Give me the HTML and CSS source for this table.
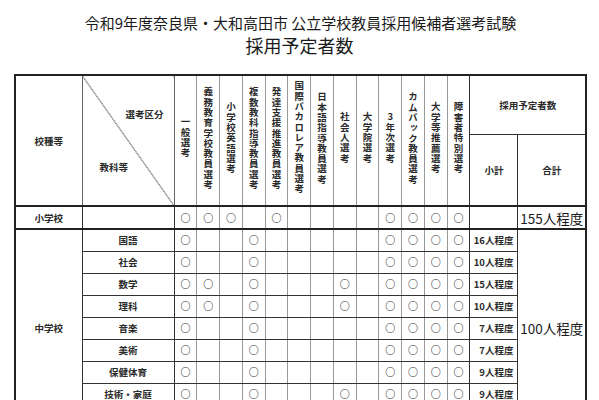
FILE: index.html
```html
<!DOCTYPE html>
<html lang="ja">
<head>
<meta charset="utf-8">
<title>採用予定者数</title>
<link rel="stylesheet" href="styles.css">
</head>
<body>
<div class="page">
  <div class="title1">令和9年度奈良県・大和高田市 公立学校教員採用候補者選考試験</div>
  <div class="title2">採用予定者数</div>
  <table class="plan">
    <colgroup>
      <col class="c-type">
      <col class="c-subj">
      <col class="c-x" span="13">
      <col class="c-sub">
      <col class="c-tot">
    </colgroup>
    <thead>
      <tr class="h1">
        <th rowspan="2" class="lab type-h">校種等</th>
        <th rowspan="2" class="lab diag"><div class="diag-in"><span class="d-top">選考区分</span><span class="d-bot">教科等</span></div></th>
        <th rowspan="2" class="v"><span class="vt">一般選考</span></th>
        <th rowspan="2" class="v"><span class="vt">義務教育学校教員選考</span></th>
        <th rowspan="2" class="v"><span class="vt">小学校英語選考</span></th>
        <th rowspan="2" class="v"><span class="vt">複数教科指導教員選考</span></th>
        <th rowspan="2" class="v"><span class="vt">発達支援推進教員選考</span></th>
        <th rowspan="2" class="v"><span class="vt">国際バカロレア教員選考</span></th>
        <th rowspan="2" class="v"><span class="vt">日本語指導教員選考</span></th>
        <th rowspan="2" class="v"><span class="vt">社会人選考</span></th>
        <th rowspan="2" class="v"><span class="vt">大学院選考</span></th>
        <th rowspan="2" class="v"><span class="vt">3年次選考</span></th>
        <th rowspan="2" class="v"><span class="vt">カムバック教員選考</span></th>
        <th rowspan="2" class="v"><span class="vt">大学等推薦選考</span></th>
        <th rowspan="2" class="v last"><span class="vt">障害者特別選考</span></th>
        <th colspan="2" class="lab plan-h">採用予定者数</th>
      </tr>
      <tr class="h2">
        <th class="lab">小計</th>
        <th class="lab">合計</th>
      </tr>
    </thead>
    <tbody>
      <tr class="elem">
        <td class="lab">小学校</td>
        <td></td>
        <td class="s">○</td><td class="s">○</td><td class="s">○</td><td class="s"></td><td class="s">○</td><td class="s"></td><td class="s"></td><td class="s"></td><td class="s"></td><td class="s">○</td><td class="s">○</td><td class="s">○</td><td class="s last">○</td>
        <td></td>
        <td class="total">155人程度</td>
      </tr>
      <tr>
        <td rowspan="9" class="lab">中学校</td>
        <td class="lab">国語</td>
        <td class="s">○</td><td class="s"></td><td class="s"></td><td class="s">○</td><td class="s"></td><td class="s"></td><td class="s"></td><td class="s"></td><td class="s"></td><td class="s">○</td><td class="s">○</td><td class="s">○</td><td class="s last">○</td>
        <td class="subt">16人程度</td>
        <td rowspan="9" class="total">100人程度</td>
      </tr>
      <tr>
        <td class="lab">社会</td>
        <td class="s">○</td><td class="s"></td><td class="s"></td><td class="s">○</td><td class="s"></td><td class="s"></td><td class="s"></td><td class="s"></td><td class="s"></td><td class="s">○</td><td class="s">○</td><td class="s">○</td><td class="s last">○</td>
        <td class="subt">10人程度</td>
      </tr>
      <tr>
        <td class="lab">数学</td>
        <td class="s">○</td><td class="s">○</td><td class="s"></td><td class="s">○</td><td class="s"></td><td class="s"></td><td class="s"></td><td class="s">○</td><td class="s"></td><td class="s">○</td><td class="s">○</td><td class="s">○</td><td class="s last">○</td>
        <td class="subt">15人程度</td>
      </tr>
      <tr>
        <td class="lab">理科</td>
        <td class="s">○</td><td class="s">○</td><td class="s"></td><td class="s">○</td><td class="s"></td><td class="s"></td><td class="s"></td><td class="s">○</td><td class="s"></td><td class="s">○</td><td class="s">○</td><td class="s">○</td><td class="s last">○</td>
        <td class="subt">10人程度</td>
      </tr>
      <tr>
        <td class="lab">音楽</td>
        <td class="s">○</td><td class="s"></td><td class="s"></td><td class="s">○</td><td class="s"></td><td class="s"></td><td class="s"></td><td class="s"></td><td class="s"></td><td class="s">○</td><td class="s">○</td><td class="s">○</td><td class="s last">○</td>
        <td class="subt">7人程度</td>
      </tr>
      <tr>
        <td class="lab">美術</td>
        <td class="s">○</td><td class="s"></td><td class="s"></td><td class="s">○</td><td class="s"></td><td class="s"></td><td class="s"></td><td class="s"></td><td class="s"></td><td class="s">○</td><td class="s">○</td><td class="s">○</td><td class="s last">○</td>
        <td class="subt">7人程度</td>
      </tr>
      <tr>
        <td class="lab">保健体育</td>
        <td class="s">○</td><td class="s"></td><td class="s"></td><td class="s">○</td><td class="s"></td><td class="s"></td><td class="s"></td><td class="s"></td><td class="s"></td><td class="s">○</td><td class="s">○</td><td class="s">○</td><td class="s last">○</td>
        <td class="subt">9人程度</td>
      </tr>
      <tr>
        <td class="lab">技術・家庭</td>
        <td class="s">○</td><td class="s"></td><td class="s"></td><td class="s">○</td><td class="s"></td><td class="s"></td><td class="s"></td><td class="s">○</td><td class="s"></td><td class="s">○</td><td class="s">○</td><td class="s">○</td><td class="s last">○</td>
        <td class="subt">9人程度</td>
      </tr>
      <tr>
        <td class="lab">英語</td>
        <td class="s">○</td><td class="s">○</td><td class="s"></td><td class="s">○</td><td class="s"></td><td class="s"></td><td class="s"></td><td class="s">○</td><td class="s"></td><td class="s">○</td><td class="s">○</td><td class="s">○</td><td class="s last">○</td>
        <td class="subt">15人程度</td>
      </tr>
    </tbody>
  </table>
</div>
</body>
</html>
```
FILE: styles.css
```css
html, body {
  margin: 0;
  padding: 0;
  background: #fff;
}
body {
  font-family: "Noto Sans CJK JP", "Noto Sans", sans-serif;
  color: #1a1a1a;
  width: 599px;
  height: 400px;
  overflow: hidden;
}
.page {
  padding-top: 15px;
}
.title1 {
  text-align: center;
  font-size: 15px;
  line-height: 16px;
  padding-left: 2px;
}
.title2 {
  text-align: center;
  font-size: 18px;
  line-height: 22px;
  margin-top: 3px;
}
.plan {
  margin-top: 18px;
  margin-left: 14px;
  border-collapse: collapse;
  table-layout: fixed;
  width: 571px;
  border: 2px solid #222;
}
.c-type { width: 67px; }
.c-subj { width: 92px; }
.c-x { width: 22.77px; }
.c-sub { width: 48px; }
.c-tot { width: 68px; }

.plan th, .plan td {
  border: 1px solid #333;
  padding: 0;
  text-align: center;
  vertical-align: middle;
  font-weight: 700;
}
.plan .lab {
  font-size: 9.5px;
  line-height: 12px;
  color: #2a2a2a;
}
.h1 { height: 59px; }
.h2 { height: 72px; }
.plan thead th {
  border-bottom: 2px solid #222;
}
.plan thead th.plan-h {
  border-bottom: 1px solid #333;
}
.plan th.type-h, .plan th.diag {
  border-right-color: #666;
}
.diag {
  background: linear-gradient(to top right, transparent calc(50% - 0.6px), #333 50%, transparent calc(50% + 0.6px));
}
.diag-in {
  display: flex;
  flex-direction: column;
  justify-content: space-between;
  height: 129px;
  padding: 32px 0 32px;
  box-sizing: border-box;
}
.d-top {
  align-self: flex-end;
  margin-right: 10px;
}
.d-bot {
  align-self: flex-start;
  margin-left: 17px;
}
.plan th.v, .plan td.s {
  border-left-color: #999;
  border-right-color: #999;
}
.plan th.v.last, .plan td.s.last {
  border-right-color: #333;
}
.vt {
  display: inline-block;
  writing-mode: vertical-rl;
  text-orientation: upright;
  font-size: 9.5px;
  letter-spacing: 0.8px;
  line-height: 12px;
  color: #2a2a2a;
}
.plan tbody tr { height: 22px; }
.plan tr.elem td {
  border-bottom: 2px solid #222;
  height: 21px;
}
.plan td.s {
  font-size: 10px;
  font-weight: 700;
  line-height: 12px;
  color: #222;
}
.plan td.subt {
  text-align: right;
  padding-right: 4px;
  font-size: 9.5px;
  color: #2a2a2a;
}
.plan td.total {
  font-size: 13.5px;
  font-weight: 400;
  color: #1a1a1a;
}
```
